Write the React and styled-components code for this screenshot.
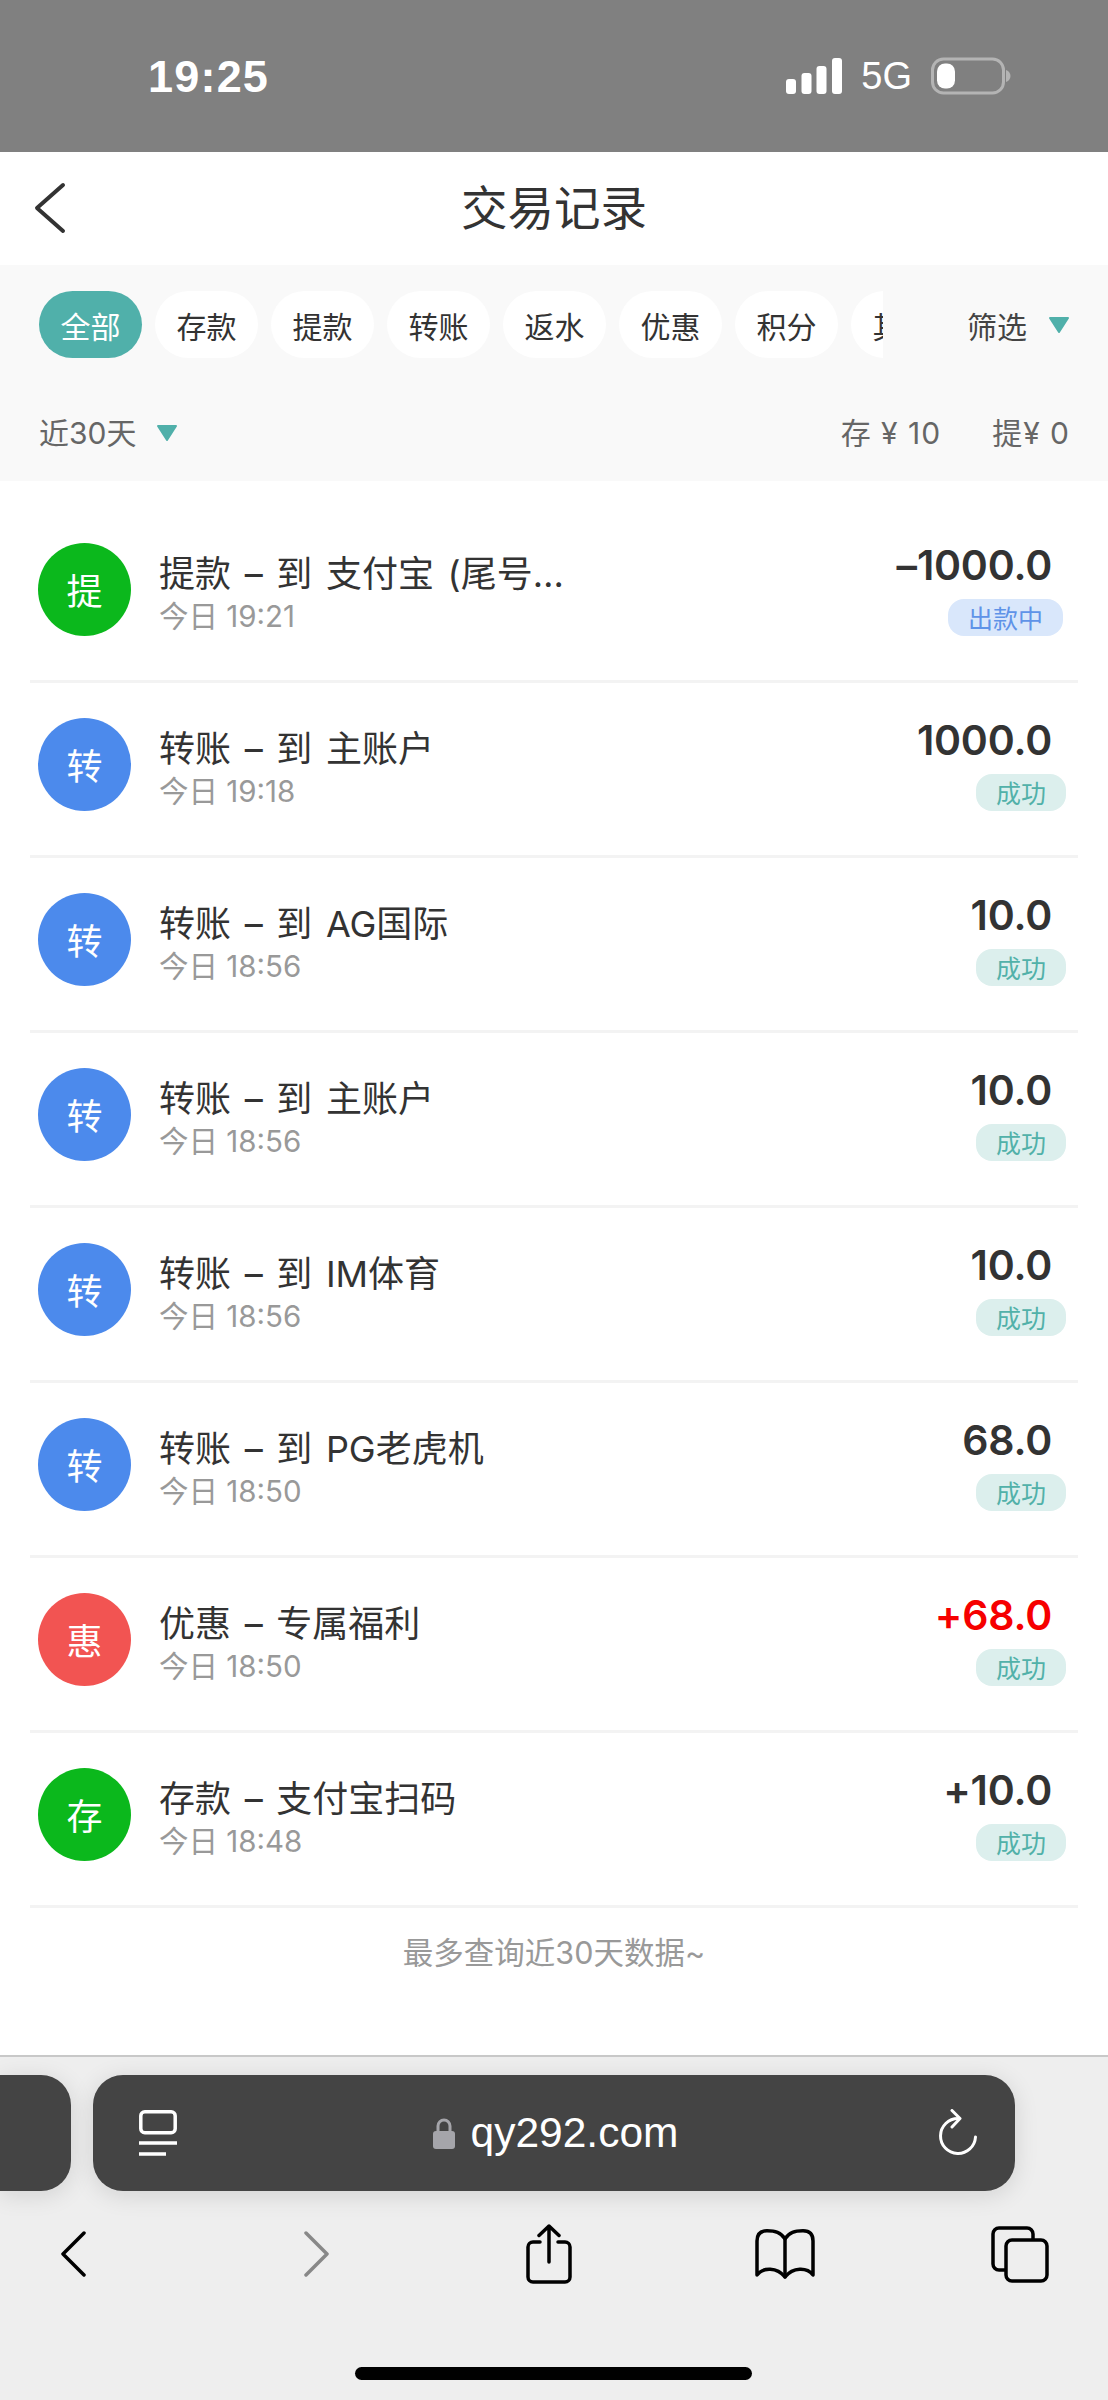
import React from "react";
import styled, { createGlobalStyle } from "styled-components";

const Global = createGlobalStyle`
  html, body { margin: 0; padding: 0; background: #fff; }
  * { box-sizing: border-box; }
  body { font-family: Inter, "Noto Sans CJK SC", sans-serif; color: #333; }
`;

const Page = styled.div`
  width: 1108px;
  height: 2400px;
  display: flex;
  flex-direction: column;
  overflow: hidden;
`;

/* status bar */
const StatusBar = styled.div`
  height: 152px;
  flex: none;
  background: #808080;
  display: flex;
  align-items: center;
  padding: 0 97px 0 148px;
  color: #fff;
`;
const Clock = styled.div`
  font: 600 45px/1 "Liberation Sans", sans-serif;
  letter-spacing: 1.2px;
  flex: 1;
`;
const Network = styled.div`
  font: 400 38px/1 "Liberation Sans", sans-serif;
  margin: 0 19px;
`;

/* header */
const NavBar = styled.header`
  height: 113px;
  flex: none;
  display: flex;
  align-items: center;
  justify-content: center;
  position: relative;
  background: #fff;
  padding-bottom: 6px;
`;
const NavBack = styled.svg`
  position: absolute;
  left: 34px;
  top: 30px;
`;
const NavTitle = styled.h1`
  margin: 0;
  font: 400 46.5px/1 "Noto Sans CJK SC", sans-serif;
  color: #333;
`;

/* filters */
const FilterPanel = styled.section`
  height: 216px;
  flex: none;
  background: #f9f9f9;
  padding-top: 26px;
`;
const FilterTop = styled.div`
  display: flex;
  align-items: center;
  height: 67px;
  padding-left: 39px;
`;
const ChipStrip = styled.div`
  width: 844px;
  flex: none;
  display: flex;
  gap: 13px;
  overflow: hidden;
`;
const Chip = styled.div`
  flex: none;
  width: 103px;
  height: 67px;
  border-radius: 34px;
  display: flex;
  align-items: center;
  justify-content: center;
  font: 400 30px/1 "Noto Sans CJK SC", sans-serif;
  background: ${(p) => (p.$active ? "#50b0aa" : "#fff")};
  color: ${(p) => (p.$active ? "#fff" : "#333")};
`;
const FilterButton = styled.div`
  margin-left: 84px;
  display: flex;
  align-items: center;
  gap: 21px;
  font: 400 30px/1 "Noto Sans CJK SC", sans-serif;
  color: #444;
`;
const CaretGlyph = styled.svg`
  flex: none;
`;
const Caret = () => (
  <CaretGlyph width="22" height="18" viewBox="0 0 22 18" fill="#50b0aa" stroke="#50b0aa" strokeWidth="2" strokeLinejoin="round">
    <path d="M2 2H20L11 16Z" />
  </CaretGlyph>
);
const SummaryRow = styled.div`
  display: flex;
  align-items: center;
  padding: 0 38px 0 39px;
  margin-top: 54px;
  height: 42px;
  font: 400 30px/1 Inter, "Noto Sans CJK SC", sans-serif;
  color: #666;
`;
const Range = styled.div`
  flex: 1;
  display: flex;
  align-items: center;
  gap: 20px;
`;
const Totals = styled.div`
  display: flex;
  gap: 51px;
  letter-spacing: 1px;
`;

/* transaction list */
const List = styled.main`
  padding: 27px 30px 0;
  background: #fff;
`;
const Row = styled.div`
  height: 175px;
  display: flex;
  align-items: center;
  padding: 0 0 10px 8px;
  border-bottom: 3px solid #f3f3f3;
`;
const Avatar = styled.div`
  width: 93px;
  height: 93px;
  flex: none;
  border-radius: 50%;
  background: ${(p) => p.$color};
  color: #fff;
  display: flex;
  align-items: center;
  justify-content: center;
  font: 400 36px/1 "Noto Sans CJK SC", sans-serif;
`;
const Info = styled.div`
  flex: 1;
  margin-left: 28px;
  display: flex;
  flex-direction: column;
  gap: 3px;
  padding-top: 7px;
`;
const Title = styled.div`
  font: 400 36px/44px Inter, "Noto Sans CJK SC", sans-serif;
  word-spacing: 3.5px;
  color: #333;
  white-space: pre;
`;
const Time = styled.div`
  font: 400 29.5px/34px Inter, "Noto Sans CJK SC", sans-serif;
  color: #999;
`;
const Side = styled.div`
  display: flex;
  flex-direction: column;
  align-items: flex-end;
  padding-right: 12px;
  gap: 11px;
`;
const Amount = styled.div`
  font: 600 41px/46px Inter, sans-serif;
  color: ${(p) => (p.$red ? "#f60000" : "#333")};
  padding-right: 14px;
  letter-spacing: -0.2px;
`;
const Badge = styled.div`
  height: 37px;
  padding: 0 20px;
  margin-right: ${(p) => (p.$pending ? "3px" : "0")};
  border-radius: 16px;
  display: flex;
  align-items: center;
  font: 400 25px/1 "Noto Sans CJK SC", sans-serif;
  background: ${(p) => (p.$pending ? "#d9e7fb" : "#dcefed")};
  color: ${(p) => (p.$pending ? "#5f93e8" : "#52b1a9")};
`;
const EndNote = styled.div`
  flex: 1;
  background: #fff;
  padding-top: 25px;
  text-align: center;
  font: 400 30.5px/40px Inter, "Noto Sans CJK SC", sans-serif;
  color: #999;
`;

/* browser chrome */
const Browser = styled.footer`
  height: 345px;
  flex: none;
  background: #eeeeee;
  border-top: 2px solid #c8c8c8;
  position: relative;
`;
const TabStrip = styled.div`
  display: flex;
  gap: 22px;
  height: 116px;
  margin-top: 18px;
`;
const PeekTab = styled.div`
  width: 71px;
  flex: none;
  background: #444;
  border-radius: 0 30px 30px 0;
  box-shadow: 0 4px 24px rgba(0, 0, 0, 0.12);
`;
const AddressBar = styled.div`
  width: 922px;
  flex: none;
  background: #444;
  border-radius: 30px;
  box-shadow: 0 4px 24px rgba(0, 0, 0, 0.12);
  display: flex;
  align-items: center;
  padding: 0 37px 0 46px;
`;
const Domain = styled.div`
  flex: 1;
  display: flex;
  align-items: center;
  justify-content: center;
  gap: 16px;
  padding-right: 4px;
  font: 400 42.5px/1 "Liberation Sans", sans-serif;
  color: #fff;
`;
const ToolBar = styled.nav`
  display: grid;
  grid-template-columns: 243px 222px 229px 236px 1fr;
  align-items: center;
  padding-left: 61px;
  height: 60px;
  margin-top: 33px;
`;
const HomeBar = styled.div`
  position: absolute;
  left: 355px;
  bottom: 20px;
  width: 397px;
  height: 13px;
  border-radius: 7px;
  background: #000;
`;

const Signal = () => (
  <svg width="56" height="36" viewBox="0 0 56 36" fill="#fff">
    <rect x="0" y="21" width="10" height="15" rx="3" />
    <rect x="15.5" y="15" width="10" height="21" rx="3" />
    <rect x="30.5" y="8" width="10" height="28" rx="3" />
    <rect x="46" y="0" width="10" height="36" rx="3" />
  </svg>
);
const Battery = () => (
  <svg width="80" height="38" viewBox="0 0 80 38">
    <rect x="1.5" y="2" width="71" height="34" rx="11" fill="none" stroke="#b4b4b4" strokeWidth="3" />
    <rect x="6" y="6.5" width="18" height="25" rx="8" fill="#fff" />
    <path d="M75 13c3 1 4.5 3.5 4.5 6s-1.5 5-4.5 6z" fill="#b4b4b4" />
  </svg>
);
const TabsGlyph = () => (
  <svg width="38" height="46" viewBox="0 0 38 46" fill="none" stroke="#fff" strokeWidth="3.5">
    <rect x="1.8" y="1.8" width="34.4" height="21" rx="4" />
    <path d="M0 33h38M0 44h27" />
  </svg>
);
const Lock = () => (
  <svg width="22" height="31" viewBox="0 0 22 31">
    <path d="M5 14V8a6 6 0 0 1 12 0v6" fill="none" stroke="#a5a5aa" strokeWidth="3" />
    <rect x="0" y="13" width="22" height="18" rx="3" fill="#a5a5aa" />
  </svg>
);
const Reload = () => (
  <svg width="40" height="48" viewBox="0 0 40 48" fill="none" stroke="#fff" strokeWidth="3" strokeLinecap="round" strokeLinejoin="round">
    <path d="M20 9.5A17.5 17.5 0 1 0 37.5 28" />
    <path d="M14 1.5L22 9.5L14 18" />
  </svg>
);
const Chevron = ({ flip, color }) => (
  <svg width="25" height="46" viewBox="0 0 25 46" fill="none" stroke={color} strokeWidth="3.5" strokeLinecap="round" strokeLinejoin="round">
    <path d={flip ? "M2 2L23 23L2 44" : "M23 2L2 23L23 44"} />
  </svg>
);
const Share = () => (
  <svg width="46" height="60" viewBox="0 0 46 60" fill="none" stroke="#000" strokeWidth="3.5" strokeLinejoin="round" strokeLinecap="round">
    <path d="M14 18H7a5 5 0 0 0-5 5v30a5 5 0 0 0 5 5h32a5 5 0 0 0 5-5V23a5 5 0 0 0-5-5h-7" />
    <path d="M23 38V2M13 11.5L23 2L33 11.5" />
  </svg>
);
const Book = () => (
  <svg width="60" height="50" viewBox="0 0 60 50" fill="none" stroke="#000" strokeWidth="3.5" strokeLinejoin="round" strokeLinecap="round">
    <path d="M30 10C26 3 20 1.8 12 1.8C5 1.8 2 6 2 12V46C8 38 22 38 30 48C38 38 52 38 58 46V12C58 6 55 1.8 48 1.8C40 1.8 34 3 30 10Z" />
    <path d="M30 10V48" />
  </svg>
);
const Tabs = () => (
  <svg width="58" height="57" viewBox="0 0 58 57" fill="none" stroke="#000" strokeWidth="3.5" strokeLinejoin="round">
    <path d="M14 44H8a6 6 0 0 1-6-6V8a6 6 0 0 1 6-6h28a6 6 0 0 1 6 6v6" />
    <rect x="15" y="14" width="41" height="41" rx="6" />
  </svg>
);

const chips = ["全部", "存款", "提款", "转账", "返水", "优惠", "积分", "其他"];

const GREEN = "#0bb81c";
const BLUE = "#4c8aec";
const RED = "#f25452";

const records = [
  { mark: "提", color: GREEN, title: "提款 – 到 支付宝 (尾号…", time: "今日 19:21", amount: "–1000.0", status: "出款中", pending: true },
  { mark: "转", color: BLUE, title: "转账 – 到 主账户", time: "今日 19:18", amount: "1000.0", status: "成功" },
  { mark: "转", color: BLUE, title: "转账 – 到 AG国际", time: "今日 18:56", amount: "10.0", status: "成功" },
  { mark: "转", color: BLUE, title: "转账 – 到 主账户", time: "今日 18:56", amount: "10.0", status: "成功" },
  { mark: "转", color: BLUE, title: "转账 – 到 IM体育", time: "今日 18:56", amount: "10.0", status: "成功" },
  { mark: "转", color: BLUE, title: "转账 – 到 PG老虎机", time: "今日 18:50", amount: "68.0", status: "成功" },
  { mark: "惠", color: RED, title: "优惠 – 专属福利", time: "今日 18:50", amount: "+68.0", status: "成功", red: true },
  { mark: "存", color: GREEN, title: "存款 – 支付宝扫码", time: "今日 18:48", amount: "+10.0", status: "成功" },
];

export default function App() {
  return (
    <Page>
      <Global />
      <StatusBar>
        <Clock>19:25</Clock>
        <Signal />
        <Network>5G</Network>
        <Battery />
      </StatusBar>

      <NavBar>
        <NavBack width="32" height="52" viewBox="0 0 32 52" fill="none" stroke="#333" strokeWidth="4" strokeLinecap="round" strokeLinejoin="round">
          <path d="M29 3L3 26L29 49" />
        </NavBack>
        <NavTitle>交易记录</NavTitle>
      </NavBar>

      <FilterPanel>
        <FilterTop>
          <ChipStrip>
            {chips.map((c, i) => (
              <Chip key={c} $active={i === 0}>{c}</Chip>
            ))}
          </ChipStrip>
          <FilterButton>筛选<Caret /></FilterButton>
        </FilterTop>
        <SummaryRow>
          <Range>近30天<Caret /></Range>
          <Totals>
            <span>存 ¥ 10</span>
            <span>提¥ 0</span>
          </Totals>
        </SummaryRow>
      </FilterPanel>

      <List>
        {records.map((r, i) => (
          <Row key={i}>
            <Avatar $color={r.color}>{r.mark}</Avatar>
            <Info>
              <Title>{r.title}</Title>
              <Time>{r.time}</Time>
            </Info>
            <Side>
              <Amount $red={r.red}>{r.amount}</Amount>
              <Badge $pending={r.pending}>{r.status}</Badge>
            </Side>
          </Row>
        ))}
      </List>
      <EndNote>最多查询近30天数据~</EndNote>

      <Browser>
        <TabStrip>
          <PeekTab />
          <AddressBar>
            <TabsGlyph />
            <Domain><Lock />qy292.com</Domain>
            <Reload />
          </AddressBar>
        </TabStrip>
        <ToolBar>
          <Chevron color="#000" />
          <Chevron flip color="#888" />
          <Share />
          <Book />
          <Tabs />
        </ToolBar>
        <HomeBar />
      </Browser>
    </Page>
  );
}
